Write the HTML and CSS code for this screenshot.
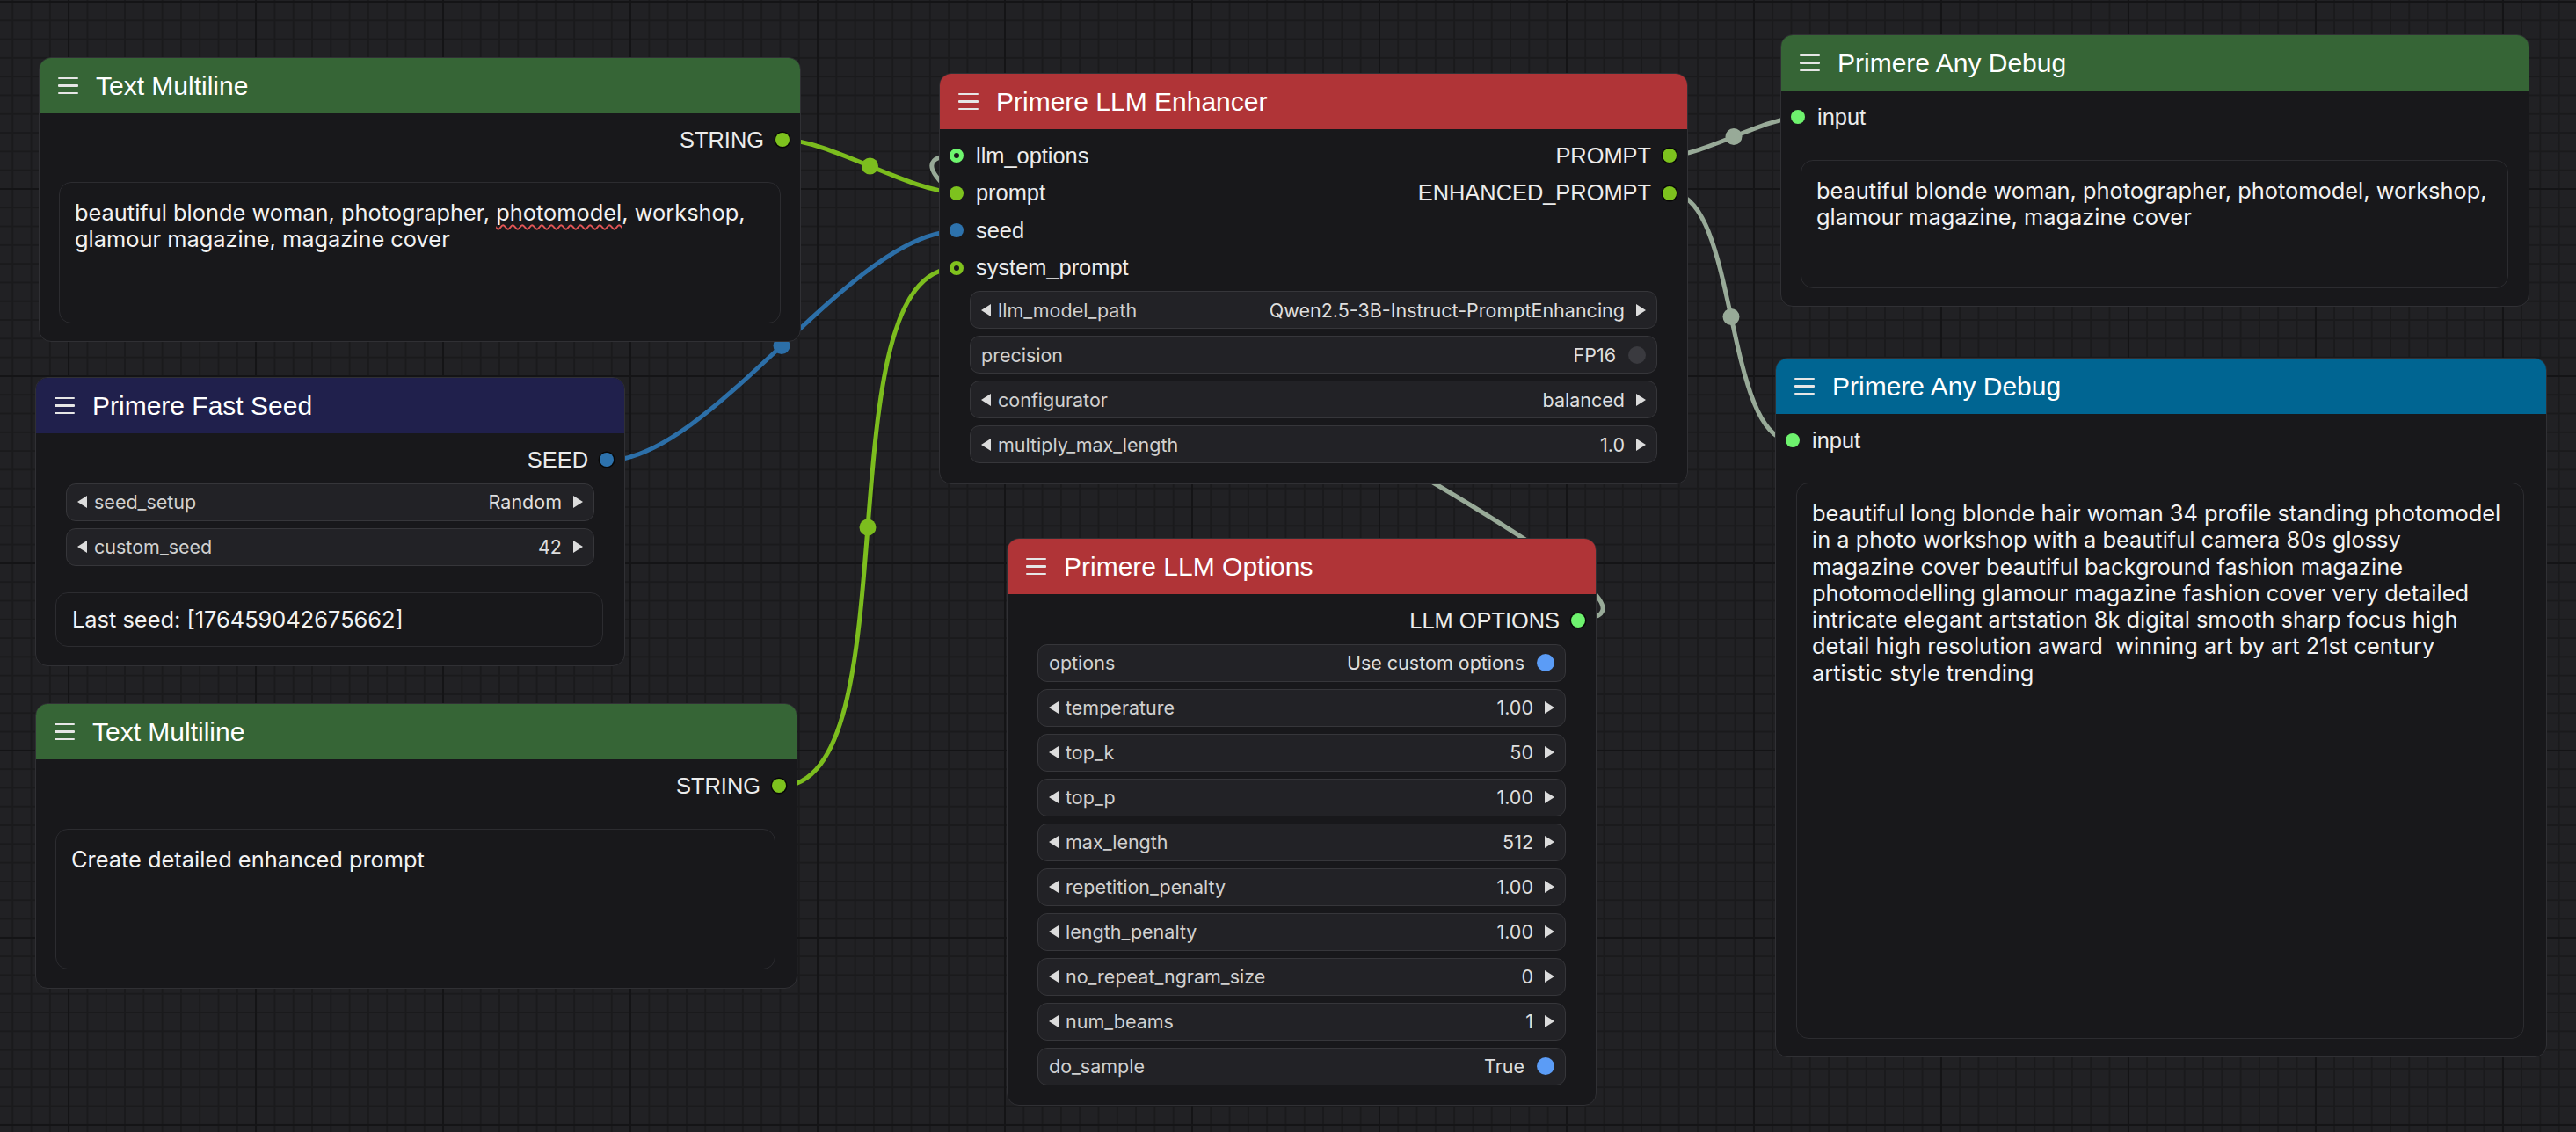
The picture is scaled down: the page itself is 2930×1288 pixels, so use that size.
FILE: index.html
```html
<!DOCTYPE html>
<html>
<head>
<meta charset="utf-8">
<link rel="stylesheet" href="styles.css">
</head>
<body>
<svg class="links" width="2930" height="1288" viewBox="0 0 2930 1288">
  <g fill="none" stroke-width="5" stroke-linecap="round">
    <path class="lk-green" d="M891,159 C942.5,159 1036.5,219 1088,219"/>
    <path class="lk-blue" d="M690,524 C809,524 969,263 1088,263"/>
    <path class="lk-green" d="M886,895 C1042,895 932,305 1088,305"/>
    <path class="lk-gray" d="M1899,177 C1937,177 2007,134 2045,134"/>
    <path class="lk-gray" d="M1899,219 C1978,219 1960,502 2039,502"/>
    <path class="lk-gray" d="M1795,704 C2015,704 868,177 1088,177"/>
  </g>
  <circle class="mk-green" cx="989.5" cy="189" r="9.5"/>
  <circle class="mk-blue" cx="889" cy="393.5" r="9.5"/>
  <circle class="mk-green" cx="987" cy="600" r="9.5"/>
  <circle class="mk-gray" cx="1972" cy="155.5" r="9.5"/>
  <circle class="mk-gray" cx="1969" cy="360.5" r="9.5"/>
</svg>

<!-- Text Multiline (top) -->
<div class="node n-text1">
  <div class="title t-green"><span class="ham"><i></i><i></i><i></i></span><span>Text Multiline</span></div>
  <div class="body">
    <div class="row"><span></span><span class="out">STRING <b class="dot d-green ol"></b></span></div>
    <div class="ta ta-a">beautiful blonde woman, photographer, <span class="spell">photomodel</span>, workshop,<br>glamour magazine, magazine cover</div>
  </div>
</div>

<!-- Primere Fast Seed -->
<div class="node n-seed">
  <div class="title t-navy"><span class="ham"><i></i><i></i><i></i></span><span>Primere Fast Seed</span></div>
  <div class="body">
    <div class="row"><span></span><span class="out">SEED <b class="dot d-blue ol"></b></span></div>
    <div class="widgets">
      <div class="w"><span class="al"></span><span class="lab">seed_setup</span><span class="val">Random</span><span class="ar"></span></div>
      <div class="w"><span class="al"></span><span class="lab">custom_seed</span><span class="val">42</span><span class="ar"></span></div>
    </div>
    <div class="seedbox">Last seed: [176459042675662]</div>
  </div>
</div>

<!-- Text Multiline (bottom) -->
<div class="node n-text2">
  <div class="title t-green"><span class="ham"><i></i><i></i><i></i></span><span>Text Multiline</span></div>
  <div class="body">
    <div class="row"><span></span><span class="out">STRING <b class="dot d-green ol"></b></span></div>
    <div class="ta ta-c">Create detailed enhanced prompt</div>
  </div>
</div>

<!-- Primere LLM Enhancer -->
<div class="node n-enh">
  <div class="title t-red"><span class="ham"><i></i><i></i><i></i></span><span>Primere LLM Enhancer</span></div>
  <div class="body">
    <div class="row"><span class="in"><b class="dot ring d-lgreen-ring"></b>llm_options</span><span class="out">PROMPT <b class="dot d-green ol"></b></span></div>
    <div class="row"><span class="in"><b class="dot d-green"></b>prompt</span><span class="out">ENHANCED_PROMPT <b class="dot d-green ol"></b></span></div>
    <div class="row"><span class="in"><b class="dot d-blue"></b>seed</span><span></span></div>
    <div class="row"><span class="in"><b class="dot ring d-green-ring"></b>system_prompt</span><span></span></div>
    <div class="widgets">
      <div class="w"><span class="al"></span><span class="lab">llm_model_path</span><span class="val">Qwen2.5-3B-Instruct-PromptEnhancing</span><span class="ar"></span></div>
      <div class="w tog"><span class="lab">precision</span><span class="val">FP16</span><span class="knob off"></span></div>
      <div class="w"><span class="al"></span><span class="lab">configurator</span><span class="val">balanced</span><span class="ar"></span></div>
      <div class="w"><span class="al"></span><span class="lab">multiply_max_length</span><span class="val">1.0</span><span class="ar"></span></div>
    </div>
  </div>
</div>

<!-- Primere LLM Options -->
<div class="node n-opt">
  <div class="title t-red"><span class="ham"><i></i><i></i><i></i></span><span>Primere LLM Options</span></div>
  <div class="body">
    <div class="row"><span></span><span class="out">LLM OPTIONS <b class="dot d-lgreen ol"></b></span></div>
    <div class="widgets">
      <div class="w tog"><span class="lab">options</span><span class="val">Use custom options</span><span class="knob on"></span></div>
      <div class="w"><span class="al"></span><span class="lab">temperature</span><span class="val">1.00</span><span class="ar"></span></div>
      <div class="w"><span class="al"></span><span class="lab">top_k</span><span class="val">50</span><span class="ar"></span></div>
      <div class="w"><span class="al"></span><span class="lab">top_p</span><span class="val">1.00</span><span class="ar"></span></div>
      <div class="w"><span class="al"></span><span class="lab">max_length</span><span class="val">512</span><span class="ar"></span></div>
      <div class="w"><span class="al"></span><span class="lab">repetition_penalty</span><span class="val">1.00</span><span class="ar"></span></div>
      <div class="w"><span class="al"></span><span class="lab">length_penalty</span><span class="val">1.00</span><span class="ar"></span></div>
      <div class="w"><span class="al"></span><span class="lab">no_repeat_ngram_size</span><span class="val">0</span><span class="ar"></span></div>
      <div class="w"><span class="al"></span><span class="lab">num_beams</span><span class="val">1</span><span class="ar"></span></div>
      <div class="w tog"><span class="lab">do_sample</span><span class="val">True</span><span class="knob on"></span></div>
    </div>
  </div>
</div>

<!-- Primere Any Debug (green) -->
<div class="node n-dbg1">
  <div class="title t-green"><span class="ham"><i></i><i></i><i></i></span><span>Primere Any Debug</span></div>
  <div class="body">
    <div class="row"><span class="in"><b class="dot d-lgreen"></b>input</span><span></span></div>
    <div class="ta ta-f">beautiful blonde woman, photographer, photomodel, workshop,<br>glamour magazine, magazine cover</div>
  </div>
</div>

<!-- Primere Any Debug (blue) -->
<div class="node n-dbg2">
  <div class="title t-cyan"><span class="ham"><i></i><i></i><i></i></span><span>Primere Any Debug</span></div>
  <div class="body">
    <div class="row"><span class="in"><b class="dot d-lgreen"></b>input</span><span></span></div>
    <div class="ta ta-g">beautiful long blonde hair woman 34 profile standing photomodel<br>in a photo workshop with a beautiful camera 80s glossy<br>magazine cover beautiful background fashion magazine<br>photomodelling glamour magazine fashion cover very detailed<br>intricate elegant artstation 8k digital smooth sharp focus high<br>detail high resolution award  winning art by art 21st century<br>artistic style trending</div>
  </div>
</div>
</body>
</html>
```

FILE: styles.css
```css
* { box-sizing: border-box; }
html, body { margin: 0; padding: 0; }
body {
  width: 2930px;
  height: 1288px;
  overflow: hidden;
  position: relative;
  background-color: #212124;
  background-image:
    linear-gradient(to right, #141416 0, #141416 2px, transparent 2px),
    linear-gradient(to bottom, #141416 0, #141416 2px, transparent 2px),
    linear-gradient(to right, #1a1a1c 0, #1a1a1c 2px, transparent 2px),
    linear-gradient(to bottom, #1a1a1c 0, #1a1a1c 2px, transparent 2px);
  background-size: 213px 100%, 100% 213px, 21.3px 100%, 100% 21.3px;
  background-position: 77px 0, 0 1px, 13.3px 0, 0 1px;
  font-family: "Liberation Sans", Arial, sans-serif;
  color: #fff;
}

.links { position: absolute; left: 0; top: 0; }
.lk-green { stroke: #7cbd1e; }
.lk-blue { stroke: #2c6fa8; }
.lk-gray { stroke: #98aa98; }
.mk-green { fill: #7cbd1e; }
.mk-blue { fill: #2c6fa8; }
.mk-gray { fill: #98aa98; }

.node {
  position: absolute;
  background: #18181b;
  border: 1px solid #303034;
  border-radius: 14px;
  overflow: hidden;
  display: flex;
  flex-direction: column;
}
.n-text1 { left: 44px; top: 65px; width: 867px; height: 324px; }
.n-seed  { left: 40px; top: 429px; width: 671px; height: 329px; }
.n-text2 { left: 40px; top: 800px; width: 867px; height: 325px; }
.n-enh   { left: 1068px; top: 83px; width: 852px; height: 468px; }
.n-opt   { left: 1145px; top: 612px; width: 671px; height: 646px; }
.n-dbg1  { left: 2025px; top: 39px; width: 852px; height: 310px; }
.n-dbg2  { left: 2019px; top: 407px; width: 878px; height: 796px; }

.title {
  height: 63px;
  flex: none;
  display: flex;
  align-items: center;
  gap: 20px;
  padding-left: 21px;
  font-size: 30px;
  color: #ffffff;
  white-space: nowrap;
}
.t-green { background: #366536; }
.t-red { background: #b03437; }
.t-navy { background: #20204c; }
.t-cyan { background: #006592; }

.ham {
  width: 23px;
  height: 19.5px;
  display: flex;
  flex-direction: column;
  justify-content: space-between;
  flex: none;
}
.ham i { display: block; height: 2.5px; background: #e6e6e6; border-radius: 1px; }

.body { padding-top: 9px; display: flex; flex-direction: column; flex: 1; }

.row {
  height: 42.5px;
  display: flex;
  align-items: center;
  justify-content: space-between;
  font-size: 25.4px;
  color: #ececec;
  white-space: nowrap;
}
.in { display: flex; align-items: center; gap: 14px; padding-left: 11px; }
.out { display: flex; align-items: center; gap: 13px; padding-right: 12px; }

.dot { display: block; width: 16px; height: 16px; border-radius: 50%; flex: none; }
.dot.ol { box-shadow: 0 0 0 1.5px #070707; }
.d-green { background: #7dc21e; }
.d-blue { background: #2d72ad; }
.d-lgreen { background: #6ef26e; }
.ring { background: #18181b; }
.d-lgreen-ring { border: 5px solid #6ef56e; }
.d-green-ring { border: 5px solid #80c21e; }

.widgets {
  display: flex;
  flex-direction: column;
  gap: 8px;
  padding: 0 34px;
  margin-top: 5px;
}
.w {
  height: 43px;
  border: 1.5px solid #36363a;
  border-radius: 11px;
  background: #222226;
  display: flex;
  align-items: center;
  padding: 0 12px;
  font-family: Inter, "Liberation Sans", sans-serif;
  font-size: 21.5px;
  color: #d0d0d0;
  white-space: nowrap;
}
.w .lab { flex: 1; margin-left: 8px; }
.w .val { color: #dedede; margin-right: 13px; }
.w.tog .lab { margin-left: 0; }
.w.tog .val { margin-right: 14px; }
.al, .ar { width: 0; height: 0; border-top: 7px solid transparent; border-bottom: 7px solid transparent; flex: none; }
.al { border-right: 11px solid #dcdcdc; }
.ar { border-left: 11px solid #dcdcdc; }
.knob { width: 20px; height: 20px; border-radius: 50%; flex: none; }
.knob.on { background: #5b9cf6; }
.knob.off { background: #3a3a3f; }

.ta {
  margin: 0 22px;
  border: 1.5px solid #2c2c30;
  border-radius: 14px;
  background: #18181b;
  padding: 19px 17px;
  font-family: Inter, "Liberation Sans", sans-serif;
  font-size: 25.4px;
  line-height: 30.3px;
  color: #f2f2f2;
  white-space: pre;
  overflow: hidden;
}
.ta-a { margin-top: 26.5px; height: 161px; }
.ta-c { margin-top: 27.5px; height: 160px; margin-right: 24px; }
.ta-f { margin-top: 27px; height: 146px; margin-right: 23px; }
.ta-g { margin-top: 26.5px; height: 633px; margin-left: 23px; margin-right: 25px; }

.spell {
  text-decoration: underline wavy #e25555;
  text-decoration-thickness: 1.5px;
  text-underline-offset: 4px;
  text-decoration-skip-ink: none;
}

.seedbox {
  margin: 30px 24px 0 22px;
  height: 62px;
  border: 1.5px solid #2c2c30;
  border-radius: 14px;
  background: #18181b;
  display: flex;
  align-items: center;
  padding: 0 18px;
  font-family: Inter, "Liberation Sans", sans-serif;
  font-size: 25.4px;
  color: #f2f2f2;
}
```
